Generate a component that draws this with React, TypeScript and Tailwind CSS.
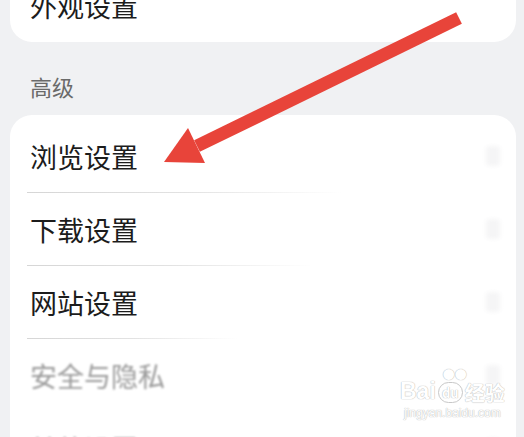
import React from 'react';

const rows = [
  { label: '浏览设置', divider: 'w-[315px]', dim: false },
  { label: '下载设置', divider: 'w-[285px]', dim: false },
  { label: '网站设置', divider: 'w-[210px]', dim: false },
  { label: '安全与隐私', divider: '', dim: true },
  { label: '其他设置', divider: '', dim: true },
];

function Chevron() {
  return <div className="h-[20px] w-[14px] rounded-sm bg-[#f5f5f6] blur-[2px]"></div>;
}

export default function App() {
  return (
    <div
      className="relative h-[437px] w-[524px] overflow-hidden bg-[#f0f1f3]"
      style={{ fontFamily: '"Noto Sans CJK SC", "Noto Sans", sans-serif' }}
    >
      {/* top card (cut off) */}
      <div className="-mt-[32px] ml-[10px] w-[506px] rounded-[22px] bg-white">
        <div className="flex h-[74px] items-center justify-between pl-[20px] pr-[18px]">
          <span className="text-[27px] leading-none text-[#1c1c1c]">外观设置</span>
        </div>
      </div>

      <div className="pl-[30px] pt-[32px] pb-[14px]">
        <span className="text-[22px] leading-[25px] text-[#6a6a6a]">高级</span>
      </div>

      <div className="ml-[10px] w-[506px] rounded-t-[22px] bg-white pt-[5px]">
        {rows.map((row) => (
          <div key={row.label}>
            <div className="flex h-[72px] items-center justify-between pl-[20px] pr-[16px]">
              <span
                className={
                  row.dim
                    ? 'text-[27px] leading-none text-[#9a9a9a] blur-[1.2px]'
                    : 'text-[27px] leading-none text-[#1c1c1c]'
                }
              >
                {row.label}
              </span>
              <Chevron />
            </div>
            {row.divider ? (
              <div className="pl-[17px]">
                <div
                  className={`h-px ${row.divider} bg-gradient-to-r from-[#d6d6d6] via-[#e2e2e2] to-transparent`}
                ></div>
              </div>
            ) : (
              <div className="h-px"></div>
            )}
          </div>
        ))}
      </div>

      {/* red arrow annotation */}
      <svg className="absolute left-0 top-0" width="524" height="437" viewBox="0 0 524 437">
        <line x1="197" y1="146" x2="459" y2="18" stroke="#e8443a" strokeWidth="13" />
        <polygon points="164,162 188,128 205,163" fill="#e8443a" />
      </svg>

      {/* watermark */}
      <div className="absolute left-[400px] top-[380px] flex flex-col items-center text-white [text-shadow:0_0_1px_#bbb,0_0_1px_#bbb]">
        <div className="flex items-end gap-[2px] leading-none">
          <span className="text-[23px] font-bold" style={{ fontFamily: '"Liberation Sans", sans-serif' }}>
            Bai
          </span>
          <span className="relative flex h-[21px] w-[25px] items-center justify-center rounded-full border border-[#c8c8c8] text-[13px] font-bold">
            <span className="absolute -top-[14px] left-[4px] text-[12px]">●●</span>
            du
          </span>
          <span className="text-[20px] font-bold">经验</span>
        </div>
        <span
          className="mt-[4px] text-[12px] leading-none"
          style={{ fontFamily: '"Liberation Sans", sans-serif' }}
        >
          jingyan.baidu.com
        </span>
      </div>
    </div>
  );
}
